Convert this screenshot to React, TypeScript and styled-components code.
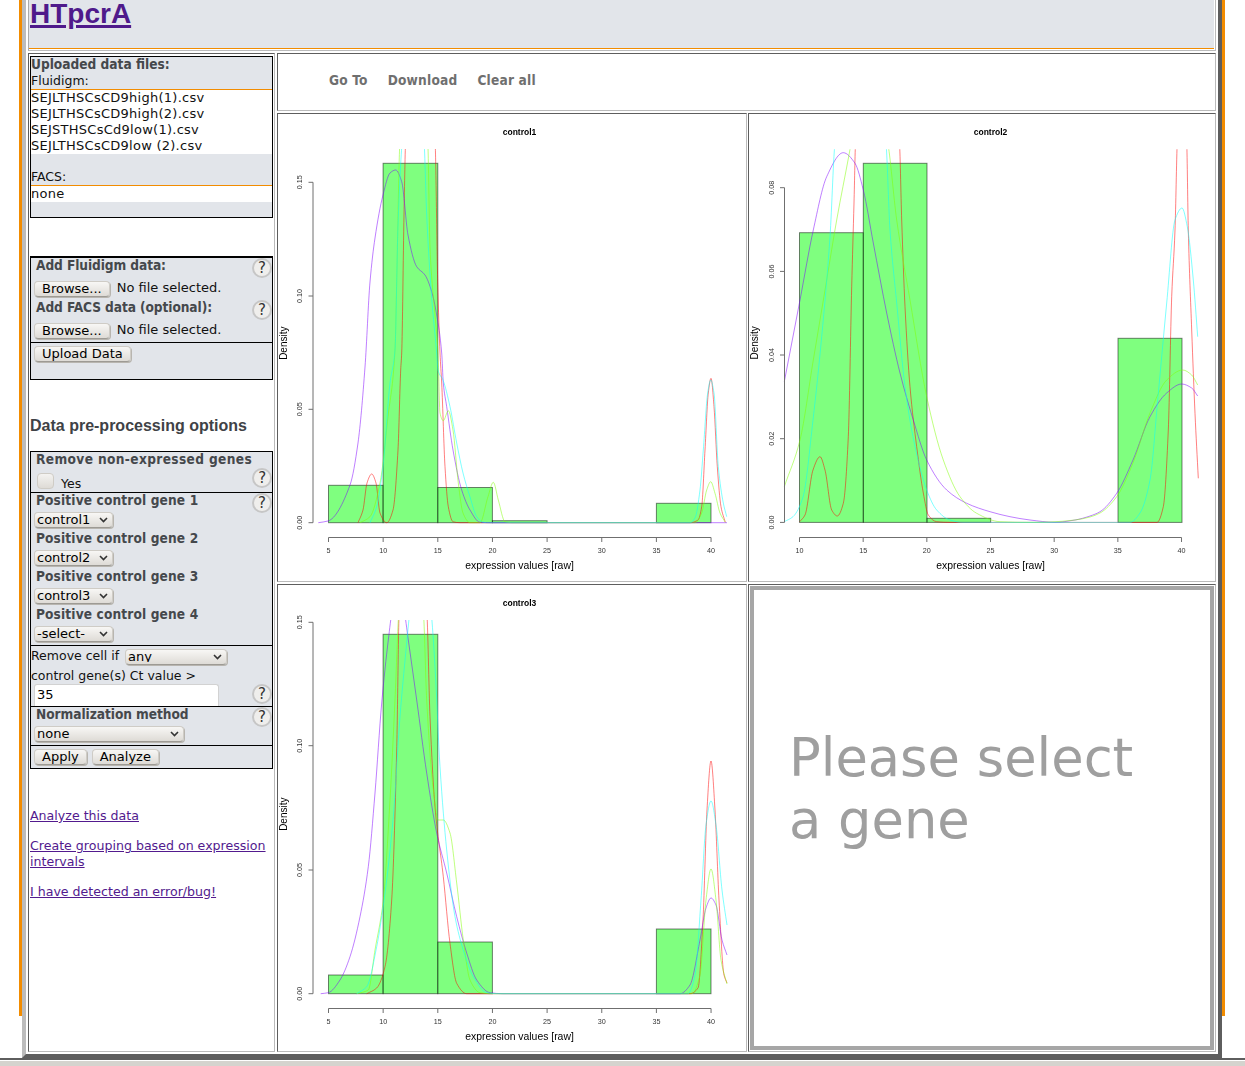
import React from 'react';
import styled, { createGlobalStyle } from 'styled-components';

const LIGHT_FONT = '"DejaVu Sans ExtraLight", "DejaVu Sans", sans-serif';
const BOLD_FONT = '"DejaVu Sans Condensed", "DejaVu Sans", sans-serif';

const Global = createGlobalStyle`
  html, body { margin: 0; padding: 0; background: #fff; }
  body { font-family: ${LIGHT_FONT}; font-size: 12.5px; line-height: 16px; color: #111; }
  * { box-sizing: border-box; }
`;

const Page = styled.div`
  width: 1245px;
  height: 1066px;
  overflow: hidden;
  display: flex;
  flex-direction: column;
`;
const Frame = styled.div`
  position: relative;
  margin-left: 22px;
  width: 1200px;
  height: 1058px;
  flex: none;
  padding: 0 2px;
  border-left: 4px solid #bcbcbc;
  border-right: 4px solid #5e5e5e;
  border-bottom: 4px solid #5e5e5e;
  &::before, &::after {
    content: '';
    position: absolute;
    top: 0;
    width: 3px;
    height: 1016px;
    background: #f28c00;
  }
  &::before { left: -7px; }
  &::after { right: -7px; }
`;
const Footer = styled.div`
  flex: none;
  height: 8px;
  background: #d5d3ce;
  border-top: 2px solid #5e5e5e;
  box-shadow: inset 0 1px 0 #fff;
`;
const Layout = styled.div`
  display: grid;
  grid-template-columns: 247px 939px;
  grid-template-rows: 51px 999px;
  column-gap: 2px;
  row-gap: 2px;
`;
const Cell = styled.div`
  border: 1px solid;
  border-color: #5e5e5e #bbbbbb #bbbbbb #5e5e5e;
  background: #fff;
`;
const Header = styled(Cell)`
  grid-column: 1 / 3;
  border-top: 0;
  border-left-color: #aaa;
  padding: 0 1px 1px 0;
`;
const HeaderFill = styled.div`
  height: 49px;
  background: #e2e5ea;
  border-bottom: 1px solid #f28c00;
  padding-left: 1px;
  overflow: hidden;
`;
const Title = styled.a`
  display: inline-block;
  font: bold 28px/28px "Liberation Sans", sans-serif;
  color: #4f1a8b;
  text-decoration: underline;
  text-decoration-thickness: 3px;
  text-underline-offset: 2px;
`;
const Sidebar = styled(Cell)`
  padding: 1px 0 0 1px;
`;
const Panel = styled.section<{ $thick?: boolean; $gap?: number }>`
  width: 243px;
  margin-top: ${p => p.$gap ?? 0}px;
  background: #e2e5ea;
  border: 1px solid #000;
  border-top-width: ${p => (p.$thick ? 2 : 1)}px;
`;
const Strong = styled.div`
  height: 16px;
  font-family: ${BOLD_FONT};
  font-weight: bold;
  font-size: 13.6px;
  line-height: 14px;
  color: #45484c;
  white-space: nowrap;
`;
const PanelTitle = styled(Strong)``;
const Spacer = styled.div<{ $h: number }>`
  height: ${p => p.$h}px;
`;
const FileHead = styled.div<{ $h?: number }>`
  height: ${p => (p.$h ?? 16) + 1}px;
  line-height: ${p => (p.$h ? p.$h - 1 : 16)}px;
  border-bottom: 1px solid #f28c00;
`;
const FileList = styled.div`
  background: #fff;
  font-size: 13px;
  letter-spacing: 0.26px;
`;
const Row = styled.div<{ $h?: number }>`
  display: flex;
  justify-content: space-between;
  align-items: flex-start;
  ${p => (p.$h ? `height: ${p.$h}px;` : '')}
`;
const Label = styled(Strong)<{ $ls?: number }>`
  padding-left: 5px;
  letter-spacing: ${p => p.$ls ?? 0}px;
`;
const Help = styled.button<{ $top?: number }>`
  flex: none;
  width: 20px;
  height: 20px;
  padding: 0;
  margin: ${p => p.$top ?? 0}px 0 0 0;
  border-radius: 50%;
  border: 2px solid #c6c6c6;
  background: #efeeec;
  color: #333;
  font: 15px/15px "DejaVu Sans", sans-serif;
`;
const Btn = styled.button`
  height: 16px;
  padding: 0 7px 3px;
  font: 13px/13px ${LIGHT_FONT};
  color: #000;
  border: 1px solid #cfccc6;
  border-bottom-color: #9d9a94;
  border-radius: 4px;
  background: linear-gradient(#f8f7f5, #dedbd6);
  box-shadow: 1px 1px 0 #b8b5af;
`;
const FileRow = styled.div`
  display: flex;
  align-items: flex-start;
  gap: 7px;
  height: 20px;
  padding: 1px 0 0 3px;
  font-size: 13px;
  line-height: 14px;
`;
const Block = styled.div<{ $h?: number; $line?: boolean }>`
  ${p => (p.$h ? `height: ${p.$h}px;` : '')}
  ${p => (p.$line ? 'border-top: 1px solid #000;' : '')}
`;
const BtnRow = styled.div`
  display: flex;
  gap: 5px;
  padding: 3px 0 0 3px;
`;
const Heading = styled.h2`
  margin: 36px 0 15px;
  font: bold 16px/20px "Liberation Sans", sans-serif;
  color: #3f4246;
`;
const CheckRow = styled.label`
  display: flex;
  align-items: flex-start;
  gap: 7px;
  padding: 5px 0 0 6px;
  line-height: 14px;
`;
const CheckText = styled.span`
  margin-top: 4px;
`;
const Check = styled.input`
  appearance: none;
  width: 17px;
  height: 16px;
  margin: 0;
  border: 1px solid #cfccc6;
  border-radius: 4px;
  background: linear-gradient(#f4f3f1, #dedbd6);
`;
const SelectWrap = styled.span<{ $w: number; $left?: number }>`
  position: relative;
  display: inline-block;
  width: ${p => p.$w}px;
  height: 16px;
  margin-left: ${p => p.$left ?? 3}px;
  vertical-align: top;
`;
const Select = styled.select`
  appearance: none;
  display: block;
  width: 100%;
  height: 16px;
  padding: 0 0 2px 2px;
  font: 13px/13px ${LIGHT_FONT};
  color: #000;
  border: 1px solid #cfccc6;
  border-bottom-color: #9d9a94;
  border-radius: 4px;
  background: linear-gradient(#f8f7f5, #dedbd6);
  box-shadow: 1px 1px 0 #b8b5af;
`;
const Chevron = styled.svg`
  position: absolute;
  right: 5px;
  top: 5px;
  width: 9px;
  height: 6px;
  pointer-events: none;
`;
const GeneBlock = styled.div`
  height: 38px;
`;
const SelectLine = styled.div`
  margin-top: 3px;
`;
const CellIfRow = styled.div`
  display: flex;
  align-items: flex-start;
  gap: 6px;
  height: 22px;
  padding-top: 3px;
  line-height: 14px;
`;
const CtRow = styled.div`
  height: 16px;
`;
const CtInput = styled.input`
  width: 185px;
  height: 22px;
  margin-left: 3px;
  padding: 0 2px 3px;
  font: 13px/14px ${LIGHT_FONT};
  color: #000;
  background: #fff;
  border: 1px solid #d2d2d2;
  border-bottom: 0;
  border-radius: 3px 3px 0 0;
`;
const Links = styled.nav`
  margin-top: 39px;
  display: flex;
  flex-direction: column;
  gap: 14px;
`;
const Link = styled.a`
  font-family: "DejaVu Sans", sans-serif;
  font-size: 12.6px;
  color: #521a8e;
  text-decoration: underline;
  line-height: 16px;
`;
const RightCol = styled.div`
  display: grid;
  grid-template-rows: 58px 469px 468px;
  grid-template-columns: 470px 468px;
  column-gap: 1px;
  row-gap: 2px;
`;
const Toolbar = styled(Cell)`
  grid-column: 1 / 3;
  display: flex;
  align-items: center;
  gap: 20px;
  padding: 0 0 4px 51px;
`;
const ToolItem = styled.a`
  font: bold 13.6px/16px ${BOLD_FONT};
  letter-spacing: 0.2px;
  color: #6f6f6f;
`;
const PlotCell = styled(Cell)`
  overflow: hidden;
`;
const PlotSvg = styled.svg`
  display: block;
  width: 100%;
  height: 100%;
  filter: blur(0.4px);
  font-family: "Liberation Sans", sans-serif;
`;
const EmptyCell = styled(Cell)`
  padding: 1px;
`;
const EmptyBox = styled.div`
  height: 100%;
  border: 4px solid #a6a6a6;
  padding: 137px 60px 0 35px;
  font: 52.7px/62px "DejaVu Sans", sans-serif;
  color: #9f9f9f;
`;

type Pt = [number, number];
type PlotData = {
  title: string; ox: number; oy: number; w: number; h: number;
  cx: number; axisX: number; axisY: number; y0: number; yAxisX: number; clipTop: number;
  xTicks: [number, number][]; yTicks: [string, number][];
  bars: [number, number, number][];
  curves: { color: string; pts: Pt[] }[];
};

const RED = 'rgba(255,0,0,.5)', GREEN = 'rgba(128,255,0,.5)', CYAN = 'rgba(0,255,255,.5)', PURPLE = 'rgba(128,0,255,.5)';

// Monotone cubic interpolation through the sampled density points
function spline(pts: Pt[]): string {
  const n = pts.length;
  const dx: number[] = [], s: number[] = [];
  for (let i = 0; i < n - 1; i++) {
    dx[i] = pts[i + 1][0] - pts[i][0];
    s[i] = (pts[i + 1][1] - pts[i][1]) / dx[i];
  }
  const m: number[] = new Array(n).fill(0);
  m[0] = s[0];
  m[n - 1] = s[n - 2];
  for (let i = 1; i < n - 1; i++) {
    if (s[i - 1] * s[i] <= 0) m[i] = 0;
    else {
      const w1 = 2 * dx[i] + dx[i - 1], w2 = dx[i] + 2 * dx[i - 1];
      m[i] = (w1 + w2) / (w1 / s[i - 1] + w2 / s[i]);
    }
  }
  let d = `M${pts[0][0]} ${pts[0][1]}`;
  for (let i = 0; i < n - 1; i++) {
    const h = dx[i] / 3;
    d += `C${(pts[i][0] + h).toFixed(2)} ${(pts[i][1] + m[i] * h).toFixed(2)} ${(pts[i + 1][0] - h).toFixed(2)} ${(pts[i + 1][1] - m[i + 1] * h).toFixed(2)} ${pts[i + 1][0]} ${pts[i + 1][1]}`;
  }
  return d;
}

const xt = (start: number, first: number, step: number, n: number): [number, number][] =>
  Array.from({ length: n }, (_, i) => [first + i * 5, start + i * step] as [number, number]);

const B1 = 522.7, B2 = 522.4, B3 = 993.7;

const plots: PlotData[] = [
  {
    title: 'control1', ox: 278, oy: 114, w: 468, h: 467, cx: 519.5, axisX: 537.5, axisY: 565.5, y0: B1, yAxisX: 313, clipTop: 149,
    xTicks: xt(328.5, 5, 54.65, 8),
    yTicks: [['0.00', B1], ['0.05', 409.3], ['0.10', 296], ['0.15', 182.3]],
    bars: [[328.5, 383.1, 485.3], [383.1, 437.8, 163.3], [437.8, 492.4, 487.5], [492.4, 547.1, 520.7], [656.4, 711, 503.3]],
    curves: [
      { color: RED, pts: [[358, B1], [363, 510], [367, 483], [371.7, 474], [376, 483], [380, 513], [386.7, B1], [393, 510], [398, 450], [400.7, 370], [401.7, 353], [404, 215], [405.7, 140], [420, 60], [435, 140], [437.7, 281.7], [440, 353], [441.7, 383], [445, 466.7], [448.3, 506.7], [453, 521.7], [460, B1], [690, B1], [698, 520], [701.7, 506.7], [705, 450], [708.3, 393], [711, 378.3], [714, 406.7], [717.3, 466.7], [721, 506.7], [725.3, 522.3]] },
      { color: PURPLE, pts: [[318.3, B1], [328, 521], [350, 485], [358, 443], [365, 367], [370, 282], [375, 238], [383, 195], [390, 173], [395.7, 170], [401.7, 181.7], [408, 235], [416.7, 266.7], [425, 275], [431.7, 291.7], [436.7, 315], [441.7, 353], [443.3, 383], [446.7, 406.7], [453, 450], [461.7, 490], [470, 510], [480, 522.3], [493, B1], [727, B1]] },
      { color: GREEN, pts: [[360, B1], [370, 516.7], [380, 483], [388, 416.7], [395, 350], [396.7, 281.7], [400, 140], [413, 60], [427.7, 140], [430, 248], [435, 315], [438, 353], [440, 413], [443.3, 420.7], [448.3, 410.7], [453, 430], [458.3, 483], [463, 513], [470, B1], [480, B1], [488, 496.7], [493.3, 482.3], [498.3, 500], [505, 521.7], [512, B1], [695, B1], [701.7, 513], [706.7, 490], [710.7, 481.7], [715, 493.3], [720, 513], [725.3, 522.3]] },
      { color: CYAN, pts: [[370, B1], [376.7, 506.7], [383, 466.7], [390, 383], [395, 350], [398, 225], [402.3, 140], [413, 60], [424, 140], [426.7, 215], [431.7, 298], [436.7, 353], [438, 370], [443, 380], [450, 406.7], [456.7, 443], [463, 473], [470, 497], [476.7, 516.7], [483, 522.3], [490, B1], [690, B1], [695, 518], [700, 490], [703.3, 450], [707.7, 393], [710.7, 380], [714, 393], [718.3, 466.7], [723.3, 503], [726.7, 516.7]] },
    ],
  },
  {
    title: 'control2', ox: 749, oy: 114, w: 466, h: 467, cx: 990.5, axisX: 537.5, axisY: 565.5, y0: B2, yAxisX: 784.5, clipTop: 149.3,
    xTicks: xt(799.5, 10, 63.67, 7),
    yTicks: [['0.00', B2], ['0.02', 438.7], ['0.04', 355], ['0.06', 271.4], ['0.08', 187.7]],
    bars: [[799.5, 863.3, 232.7], [863.3, 927, 163.3], [927, 990.7, 518.3], [1118, 1182, 338.3]],
    curves: [
      { color: RED, pts: [[799.7, 521.7], [805, 515], [813, 470], [820, 456.7], [825, 470], [831.7, 510], [837.3, 516], [843.3, 503.3], [848.3, 436.7], [851.7, 286.7], [854, 203], [855.7, 140], [877, 60], [899.3, 140], [901.7, 220], [905, 306.7], [910, 386.7], [916.7, 446.7], [923.3, 493], [928.3, 515], [936.7, 521.7], [950, B2], [1157, B2], [1163.3, 506.7], [1168.3, 430], [1171.7, 296.7], [1175, 230], [1177.3, 140], [1182, 60], [1186.7, 140], [1188.3, 230], [1191.7, 330], [1195, 413.3], [1198.3, 478.3]] },
      { color: PURPLE, pts: [[784.3, 381.7], [800, 300], [813.3, 230], [826.7, 176.7], [843.3, 152.7], [855, 163.3], [863.3, 190], [873.3, 243], [886.7, 313], [900, 373], [913.3, 420], [926.7, 460], [946.7, 490], [966.7, 503.3], [990, 511.7], [1010, 516.7], [1030, 520], [1055, 522.3], [1075, 520], [1090, 516], [1100, 511.7], [1116.7, 493.3], [1133, 460], [1150, 416.7], [1166.7, 393], [1181.7, 384], [1191.7, 388], [1197.7, 396]] },
      { color: GREEN, pts: [[784.3, 486.7], [800, 440], [813.3, 360], [826.7, 280], [836.7, 220], [849.3, 153.3], [851.7, 140], [869, 80], [887.3, 140], [896.7, 220], [910, 300], [926.7, 396.7], [943.3, 460], [960, 496.7], [976.7, 513.3], [1000, 521.7], [1030, B2], [1050, 522], [1075, 520], [1090, 517], [1100, 513], [1116.7, 496.7], [1133, 463], [1150, 413], [1166.7, 380], [1182.7, 370], [1191.7, 375], [1197.7, 385]] },
      { color: CYAN, pts: [[784.3, 521.7], [793, 516.7], [803, 497], [813, 420], [821.7, 336.7], [830, 236.7], [835.3, 140], [860, 60], [885.7, 140], [890, 230], [896.7, 303], [905, 386.7], [913, 436.7], [926.7, 490], [936.7, 510], [950, 520], [963, B2], [1130, B2], [1140, 513], [1150, 480], [1158, 396.7], [1166.7, 303], [1175, 220], [1182, 208], [1187.3, 226.7], [1193.3, 280], [1197.7, 336.7]] },
    ],
  },
  {
    title: 'control3', ox: 278, oy: 585, w: 468, h: 466, cx: 519.5, axisX: 1008.5, axisY: 1036.5, y0: B3, yAxisX: 313, clipTop: 620,
    xTicks: xt(328.5, 5, 54.65, 8),
    yTicks: [['0.00', B3], ['0.05', 870], ['0.10', 745.7], ['0.15', 622.3]],
    bars: [[328.5, 383.1, 975], [383.1, 437.8, 634.3], [437.8, 492.4, 942], [656.4, 711, 929]],
    curves: [
      { color: RED, pts: [[366.7, B3], [376.7, 988], [385, 966.7], [391.7, 900], [396.7, 750], [399.3, 610], [413, 540], [426.7, 610], [430, 716.7], [435, 806.7], [443.3, 876.7], [450, 943.3], [456.7, 983.3], [466.7, B3], [690, B3], [698, 988], [703, 920], [707, 810], [711, 761], [715, 810], [719, 900], [724, 975], [727, 983]] },
      { color: PURPLE, pts: [[320.7, B3], [328.3, 992.7], [340, 980], [350, 956.7], [360, 916.7], [368.3, 866.7], [375, 793], [381.7, 703], [388.3, 640], [392.3, 610], [398, 590], [404, 610], [408.3, 640], [416.7, 700], [426.7, 773], [436.7, 833], [446.7, 873], [456.7, 916.7], [466.7, 953], [476.7, 980], [490, 992.7], [503, B3], [680, B3], [690, 985], [700, 940], [706, 908], [711, 898], [716, 905], [722, 940], [727, 955]] },
      { color: GREEN, pts: [[356.7, B3], [368.3, 990], [375, 950], [383.3, 900], [390, 800], [395, 700], [399, 610], [411, 540], [423.3, 610], [426.7, 700], [433.3, 790], [438.3, 820], [443.3, 820], [450, 833], [456.7, 883], [463.3, 940], [470, 980], [480, 992.7], [490, B3], [692, B3], [700, 975], [706, 900], [711, 869], [716, 900], [721, 960], [727, 984]] },
      { color: CYAN, pts: [[356.7, B3], [366.7, 986.7], [376.7, 946.7], [385, 893], [393.3, 816.7], [400, 716.7], [406, 650], [410, 610], [420, 540], [431, 610], [435, 666.7], [440, 766.7], [446.7, 850], [455, 916.7], [463.3, 950], [473.3, 976.7], [486.7, 992.7], [496.7, B3], [688, B3], [695, 975], [701, 900], [706, 825], [711, 801], [716, 825], [722, 890], [727, 925]] },
    ],
  },
];

const AXIS = '#6f6f6f';

function Plot({ d }: { d: PlotData }) {
  const clipId = `clip-${d.title}`;
  const labelX = d.yAxisX - 11;
  const xs = d.xTicks.map(t => t[1]);
  const ys = d.yTicks.map(t => t[1]);
  return (
    <PlotSvg viewBox={`${d.ox} ${d.oy} ${d.w} ${d.h}`} preserveAspectRatio="none">
      <defs>
        <clipPath id={clipId}>
          <rect x={d.ox} y={d.clipTop} width={d.w} height={d.h} />
        </clipPath>
      </defs>
      <text x={d.cx} y={d.oy + 21} fontSize="8.5" fontWeight="bold" textAnchor="middle" fill="#000">{d.title}</text>
      {d.bars.map(([a, b, top], i) => (
        <rect key={i} x={a} y={top} width={b - a} height={d.y0 - top} fill="rgba(0,255,0,.5)" stroke="rgba(0,0,0,.5)" strokeWidth="1" />
      ))}
      <g clipPath={`url(#${clipId})`} fill="none" strokeWidth="1">
        {d.curves.map((c, i) => <path key={i} d={spline(c.pts)} stroke={c.color} />)}
      </g>
      <g stroke={AXIS} strokeWidth="1" fill="none">
        <path d={`M${xs[0]} ${d.axisX}H${xs[xs.length - 1]}`} />
        {xs.map(x => <path key={x} d={`M${x} ${d.axisX}v4.5`} />)}
        <path d={`M${d.yAxisX} ${ys[0]}V${ys[ys.length - 1]}`} />
        {ys.map(y => <path key={y} d={`M${d.yAxisX} ${y}h-4.5`} />)}
      </g>
      <g fontSize="7.2" fill="#333" textAnchor="middle">
        {d.xTicks.map(([v, x]) => <text key={v} x={x} y={d.axisX + 15}>{v}</text>)}
        {d.yTicks.map(([v, y]) => (
          <text key={v} transform={`translate(${labelX} ${y}) rotate(-90)`}>{v}</text>
        ))}
      </g>
      <text x={d.cx} y={d.axisY + 3} fontSize="10.4" textAnchor="middle" fill="#000">expression values [raw]</text>
      <text transform={`translate(${d.yAxisX - 26.5} ${d.y0 - 179.5}) rotate(-90)`} fontSize="10" textAnchor="middle" fill="#000">Density</text>
    </PlotSvg>
  );
}

function Sel({ w, value, options, left }: { w: number; value: string; options: string[]; left?: number }) {
  return (
    <SelectWrap $w={w} $left={left}>
      <Select defaultValue={value}>
        {options.map(o => <option key={o}>{o}</option>)}
      </Select>
      <Chevron viewBox="0 0 9 6"><path d="M1 1l3.5 3.5L8 1" fill="none" stroke="#333" strokeWidth="1.6" /></Chevron>
    </SelectWrap>
  );
}

const genes = ['control1', 'control2', 'control3', '-select-'];

export default function App() {
  return (
    <Page>
      <Global />
      <Frame>
        <Layout>
          <Header>
            <HeaderFill><Title href="#">HTpcrA</Title></HeaderFill>
          </Header>
          <Sidebar>
            <Panel $gap={1}>
              <PanelTitle>Uploaded data files:</PanelTitle>
              <FileHead>Fluidigm:</FileHead>
              <FileList>
                <div>SEJLTHSCsCD9high(1).csv</div>
                <div>SEJLTHSCsCD9high(2).csv</div>
                <div>SEJSTHSCsCd9low(1).csv</div>
                <div>SEJLTHSCsCD9low (2).csv</div>
              </FileList>
              <Spacer $h={16} />
              <FileHead $h={15}>FACS:</FileHead>
              <FileList><div>none</div></FileList>
              <Spacer $h={15} />
            </Panel>

            <Panel $thick $gap={38}>
              <Block $h={42}>
                <Row $h={22}><Label $ls={-0.08}>Add Fluidigm data:</Label><Help>?</Help></Row>
                <FileRow><Btn>Browse...</Btn>No file selected.</FileRow>
              </Block>
              <Block $h={42}>
                <Row $h={22}><Label $ls={-0.08}>Add FACS data (optional):</Label><Help>?</Help></Row>
                <FileRow><Btn>Browse...</Btn>No file selected.</FileRow>
              </Block>
              <Block $h={37} $line>
                <BtnRow><Btn>Upload Data</Btn></BtnRow>
              </Block>
            </Panel>

            <Heading>Data pre-processing options</Heading>

            <Panel>
              <Block $h={40}>
                <Row>
                  <div>
                    <Label $ls={0.36}>Remove non-expressed genes</Label>
                    <CheckRow><Check type="checkbox" /><CheckText>Yes</CheckText></CheckRow>
                  </div>
                  <Help $top={16}>?</Help>
                </Row>
              </Block>
              <Block $line>
                {genes.map((g, i) => (
                  <GeneBlock key={g}>
                    <Row $h={16}>
                      <Label $ls={0.13}>Positive control gene {i + 1}</Label>
                      {i === 0 && <Help>?</Help>}
                    </Row>
                    <SelectLine><Sel w={79} value={g} options={genes} /></SelectLine>
                  </GeneBlock>
                ))}
              </Block>
              <Block $line $h={61}>
                <CellIfRow>Remove cell if <Sel w={102} value="any" options={['any', 'all']} left={0} /></CellIfRow>
                <CtRow>control gene(s) Ct value &gt;</CtRow>
                <Row>
                  <CtInput defaultValue="35" />
                  <Help>?</Help>
                </Row>
              </Block>
              <Block $line $h={39}>
                <Row $h={19}><Label $ls={-0.05}>Normalization method</Label><Help>?</Help></Row>
                <div><Sel w={150} value="none" options={['none']} /></div>
              </Block>
              <Block $line $h={23}>
                <BtnRow><Btn>Apply</Btn><Btn>Analyze</Btn></BtnRow>
              </Block>
            </Panel>

            <Links>
              <Link href="#">Analyze this data</Link>
              <Link href="#">Create grouping based on expression intervals</Link>
              <Link href="#">I have detected an error/bug!</Link>
            </Links>
          </Sidebar>
          <RightCol>
            <Toolbar>
              <ToolItem>Go To</ToolItem>
              <ToolItem>Download</ToolItem>
              <ToolItem>Clear all</ToolItem>
            </Toolbar>
            <PlotCell><Plot d={plots[0]} /></PlotCell>
            <PlotCell><Plot d={plots[1]} /></PlotCell>
            <PlotCell><Plot d={plots[2]} /></PlotCell>
            <EmptyCell>
              <EmptyBox>Please select a gene</EmptyBox>
            </EmptyCell>
          </RightCol>
        </Layout>
      </Frame>
      <Footer />
    </Page>
  );
}
